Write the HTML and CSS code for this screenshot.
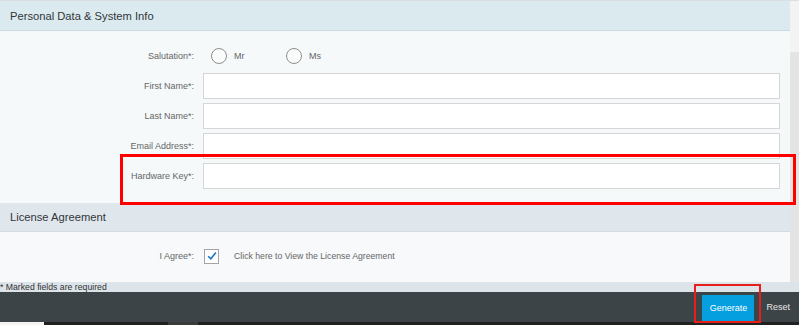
FILE: index.html
```html
<!DOCTYPE html>
<html lang="en">
<head>
    <meta charset="UTF-8">
    <title>License Key Request</title>
    <link rel="stylesheet" href="styles.css">
</head>
<body>

<div class="screen">
    <div class="top">
        <form class="form">
            <div class="section-head">Personal Data &amp; System Info</div>
            <div class="section-body">
                <div class="row">
                    <label>Salutation*:</label>
                    <div class="radio-group">
                        <span class="option"><span class="radio"></span>Mr</span>
                        <span class="option"><span class="radio"></span>Ms</span>
                    </div>
                </div>
                <div class="row">
                    <label for="first">First Name*:</label>
                    <input type="text" id="first">
                </div>
                <div class="row">
                    <label for="last">Last Name*:</label>
                    <input type="text" id="last">
                </div>
                <div class="row">
                    <label for="email">Email Address*:</label>
                    <input type="email" id="email">
                </div>
                <div class="row">
                    <label for="hwkey">Hardware Key*:</label>
                    <input type="text" id="hwkey">
                </div>
            </div>

            <div class="section-head license-head">License Agreement</div>
            <div class="section-body license-body">
                <div class="row">
                    <label>I Agree*:</label>
                    <div class="agree">
                        <span class="checkbox">
                            <svg width="12" height="12" viewBox="0 0 12 12">
                                <path d="M2.2 6.2 L4.8 8.8 L9.8 2.6" fill="none" stroke="#1577c6" stroke-width="1.6"/>
                            </svg>
                        </span>
                        <span class="agree-text">Click here to View the License Agreement</span>
                    </div>
                </div>
            </div>
        </form>
        <div class="scrollbar"><div class="scroll-track"></div></div>
    </div>

    <div class="note">* Marked fields are required</div>

    <div class="footer">
        <button class="btn-generate" type="button">Generate</button>
        <span class="btn-reset">Reset</span>
    </div>

    <div class="taskbar">
        <span class="taskbar-light"></span>
        <span class="taskbar-gap"></span>
        <span class="taskbar-mid"></span>
    </div>
</div>

<!-- annotation boxes drawn over the screenshot -->
<div class="mark mark-key"></div>
<div class="mark mark-generate"></div>

</body>
</html>
```

FILE: styles.css
```css
/* Base */
* {
    box-sizing: border-box;
    margin: 0;
    padding: 0;
}
body {
    font-family: "Liberation Sans", Arial, sans-serif;
    width: 799px;
    height: 325px;
    overflow: hidden;
    position: relative;
    background-color: #3c4447;
}
.screen {
    display: flex;
    flex-direction: column;
    height: 325px;
}

/* Form + scrollbar */
.top {
    display: flex;
    border-top: 1px solid #dcdfe0;
}
.form {
    width: 790px;
}
.scrollbar {
    width: 9px;
    background-color: #f3f3f3;
    padding-top: 51px;
    display: flex;
}
.scroll-track {
    flex: 1;
    background-color: #e4e4e4;
}

/* Section headers */
.section-head {
    height: 30px;
    padding-left: 10px;
    display: flex;
    align-items: center;
    font-size: 11.2px;
    color: #32363a;
    background-color: #dbeaef;
    border-bottom: 1px solid #cad9df;
}
.license-head {
    height: 29px;
    background-color: #dfe6ec;
    border-bottom-color: #d3dce3;
}

/* Section bodies */
.section-body {
    background-color: #f5f9fa;
    padding: 12px 10px 14px 0;
    display: flex;
    flex-direction: column;
    gap: 4px;
}
.license-body {
    background-color: #f7f9fb;
    padding: 11px 10px 13px 0;
}
.row {
    display: grid;
    grid-template-columns: 194px 1fr;
    column-gap: 9px;
    align-items: center;
    height: 26px;
}
.row label {
    text-align: right;
    font-size: 9px;
    color: #666;
}
.row input {
    height: 26px;
    width: 100%;
    border: 1px solid #d6d6d6;
    background-color: #fff;
    outline: none;
}

/* Radios */
.radio-group {
    display: flex;
    align-items: center;
    padding-left: 8px;
}
.option {
    width: 75px;
    display: flex;
    align-items: center;
    gap: 7px;
    font-size: 9px;
    color: #666;
}
.radio {
    width: 16px;
    height: 16px;
    border: 1px solid #8e8e8e;
    border-radius: 50%;
    background-color: #fafcfc;
}

/* Checkbox */
.agree {
    display: flex;
    align-items: center;
    padding-left: 1px;
}
.checkbox {
    width: 15px;
    height: 15px;
    border: 1px solid #a4a4a4;
    background-color: #fff;
    display: flex;
    align-items: center;
    justify-content: center;
}
.agree-text {
    margin-left: 15px;
    font-size: 8.7px;
    color: #666;
}

/* Required note */
.note {
    height: 10px;
    line-height: 10px;
    font-size: 8.7px;
    color: #333;
    background-color: #dde4e9;
    white-space: nowrap;
}

/* Footer */
.footer {
    height: 30px;
    background-color: #3c4447;
    display: flex;
    align-items: center;
    justify-content: flex-end;
    padding-right: 9px;
    gap: 12px;
}
.btn-generate {
    height: 26px;
    width: 52px;
    border: none;
    background-color: #059fe0;
    color: #fff;
    font-family: "Liberation Sans", Arial, sans-serif;
    font-size: 9px;
    margin-top: 2px;
}
.btn-reset {
    font-size: 9px;
    color: #e6e6e6;
}

/* Taskbar strip */
.taskbar {
    height: 3px;
    display: flex;
    background-color: #202222;
}
.taskbar-light {
    width: 44px;
    background-color: #f4f4f4;
}
.taskbar-gap {
    width: 124px;
}
.taskbar-mid {
    width: 30px;
    background-color: #3a3c3c;
}

/* Annotation boxes */
.mark {
    position: absolute;
    border: 3px solid #fe0000;
}
.mark-key {
    left: 120px;
    top: 154px;
    width: 676px;
    height: 51px;
}
.mark-generate {
    left: 694px;
    top: 284px;
    width: 67px;
    height: 39px;
    border-width: 2px;
    border-color: #ea1d1d;
}
```
